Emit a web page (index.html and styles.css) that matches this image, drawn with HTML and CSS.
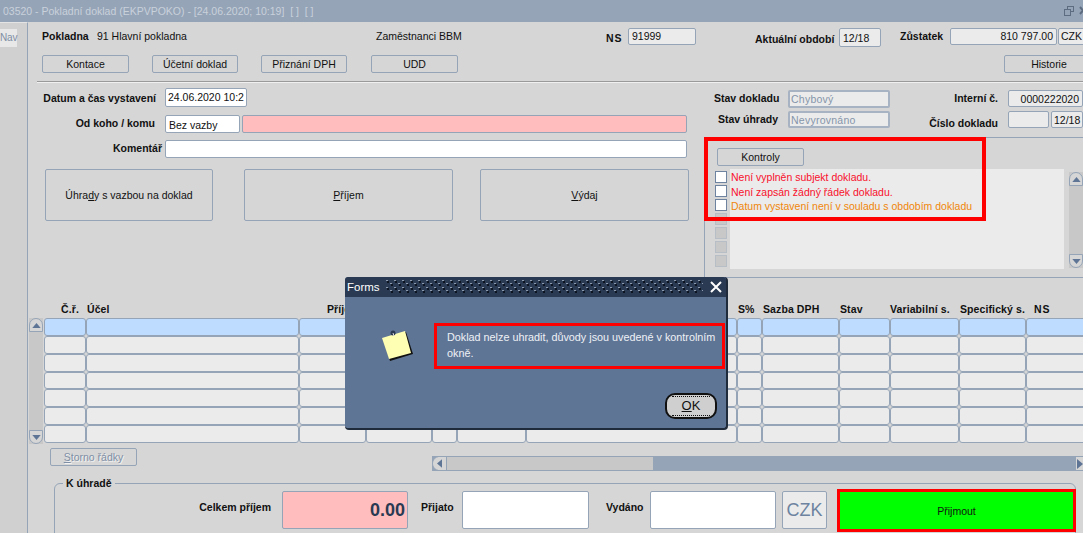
FILE: index.html
```html
<!DOCTYPE html>
<html lang="cs">
<head>
<meta charset="utf-8">
<title>Pokladní doklad</title>
<link rel="stylesheet" href="styles.css">
</head>
<body>
<div class="app">
  <header class="titlebar">
    <span class="title-text">03520 - Pokladní doklad (EKPVPOKO) - [24.06.2020; 10:19]&nbsp; [ ]&nbsp; [ ]</span>
    <svg class="win-icons" width="19" height="12" viewBox="0 0 19 12"><g fill="none" stroke="#5d6c80" stroke-width="1"><rect x="3.5" y="1.5" width="6" height="5"/><rect x="0.5" y="4.5" width="6" height="6" fill="#95a4b7"/><path d="M16 2l6 7M22 2l-6 7" stroke-width="2"/></g></svg>
  </header>
  <div class="workspace">
    <nav class="nav"><span class="nav-tab">Nav</span></nav>
    <main class="main">
      <section class="head-row">
        <b class="lbl">Pokladna</b>
        <span class="txt">91 Hlavní pokladna</span>
        <span class="txt">Zaměstnanci BBM</span>
        <b class="lbl wide">NS</b>
        <span class="field ro h17">91999</span>
        <span></span>
        <b class="lbl low">Aktuální období</b>
        <span class="field ro h20">12/18</span>
        <span></span>
        <b class="lbl">Zůstatek</b>
        <span class="field ro h17 right">810 797.00</span>
        <span></span>
        <span class="field ro h17 czk-code">CZK</span>
      </section>
      <section class="btn-row">
        <button class="btn w-87">Kontace</button>
        <button class="btn w-86 gap-23">Účetní doklad</button>
        <button class="btn w-86 gap-23">Přiznání DPH</button>
        <button class="btn w-87 gap-24">UDD</button>
        <button class="btn w-historie">Historie</button>
      </section>
      <div class="separator"></div>
      <section class="form-area">
        <div class="form-left">
          <div class="frow r-datum">
            <b class="lbl flabel">Datum a čas vystavení</b>
            <span class="field white w-datum">24.06.2020 10:2</span>
          </div>
          <div class="frow r-od">
            <b class="lbl flabel">Od koho / komu</b>
            <span class="field white w-vazba">Bez vazby</span>
            <span class="field pink w-subj"></span>
          </div>
          <div class="frow r-kom">
            <b class="lbl flabel kom">Komentář</b>
            <span class="field white w-kom"></span>
          </div>
          <div class="big-row">
            <button class="btn big b1">Úhra<u>d</u>y s vazbou na doklad</button>
            <button class="btn big b2"><u>P</u>říjem</button>
            <button class="btn big b3"><u>V</u>ýdaj</button>
          </div>
        </div>
        <div class="form-right">
          <div class="state">
            <div class="state-col">
              <div class="srow"><b class="lbl slabel">Stav dokladu</b><span class="field state-f">Chybový</span></div>
              <div class="srow"><b class="lbl slabel">Stav úhrady</b><span class="field state-f">Nevyrovnáno</span></div>
            </div>
            <div class="state-col">
              <div class="srow"><b class="lbl nlabel">Interní č.</b><span class="field ro num right">0000222020</span></div>
              <div class="srow"><b class="lbl nlabel low2">Číslo dokladu</b><span class="field ro cis"></span><span class="field ro per">12/18</span></div>
            </div>
          </div>
          <div class="control-panel">
            <button class="btn kontroly">Kontroly</button>
            <div class="checks">
              <div class="check-col">
                <i class="chk on"></i><i class="chk on"></i><i class="chk on"></i><i class="chk"></i><i class="chk"></i><i class="chk"></i><i class="chk"></i>
              </div>
              <div class="check-text">
                <div class="err">Není vyplněn subjekt dokladu.</div>
                <div class="err">Není zapsán žádný řádek dokladu.</div>
                <div class="warn">Datum vystavení není v souladu s obdobím dokladu</div>
              </div>
              <div class="vscroll small">
                <span class="sb-btn up"><svg width="9" height="5" viewBox="0 0 10 6"><path d="M5 0l5 6H0z"/></svg></span>
                <span class="sb-btn down"><svg width="9" height="5" viewBox="0 0 10 6"><path d="M0 0h10L5 6z"/></svg></span>
              </div>
            </div>
            <div class="highlight"></div>
          </div>
        </div>
      </section>
      <section class="table-area">
        <div class="grid-cols thead">
          <b class="h-cr">Č.ř.</b><b class="h-ucel">Účel</b><b class="h-prij">Příjem</b><b></b><b></b><b></b><b></b>
          <b class="h-s">S%</b><b class="h-s">Sazba DPH</b><b class="h-s">Stav</b><b class="h-v">Variabilní s.</b><b class="h-s">Specifický s.</b><b class="h-ns">NS</b>
        </div>
        <div class="table-body">
          <div class="vscroll">
            <span class="sb-btn up"><svg width="9" height="5" viewBox="0 0 10 6"><path d="M5 0l5 6H0z"/></svg></span>
            <span class="sb-btn down"><svg width="9" height="5" viewBox="0 0 10 6"><path d="M0 0h10L5 6z"/></svg></span>
          </div>
          <div class="grid-cols tbody" id="tbody"></div>
        </div>
      </section>
      <section class="under-table">
        <button class="btn storno"><u>S</u>torno řádky</button>
        <div class="hscroll">
          <span class="hs-left"><svg width="5" height="9" viewBox="0 0 6 10"><path d="M6 0v10L0 5z"/></svg></span>
          <span class="hs-thumb"></span>
          <span class="hs-track"></span>
          <span class="hs-right"><svg width="6" height="10" viewBox="0 0 6 10"><path d="M0 0l6 5-6 5z"/></svg></span>
        </div>
      </section>
      <fieldset class="pay">
        <legend>K úhradě</legend>
        <div class="pay-row">
          <b class="lbl pay-l1">Celkem příjem</b>
          <span class="field pink total">0.00</span>
          <b class="lbl pay-l2">Přijato</b>
          <span class="field white amt1"></span>
          <b class="lbl pay-l3">Vydáno</b>
          <span class="field white amt2"></span>
          <span class="field ro czk">CZK</span>
          <button class="accept">Přijmout</button>
        </div>
      </fieldset>
    </main>
  </div>
  <div class="dialog" role="dialog">
    <div class="dlg-title">
      <span class="dlg-name">Forms</span>
      <svg class="dlg-dots" width="318" height="14"><defs><pattern id="dots" width="8" height="7" patternUnits="userSpaceOnUse"><rect x="1" y="0" width="2" height="1" fill="#8d9aae"/><rect x="2" y="1" width="2" height="2" fill="#0d1522"/><rect x="5" y="3" width="2" height="1" fill="#8d9aae"/><rect x="6" y="4" width="2" height="2" fill="#0d1522"/></pattern></defs><rect width="318" height="14" fill="url(#dots)"/></svg>
      <svg class="dlg-x" width="12" height="12" viewBox="0 0 12 12"><path d="M1 1l10 10M11 1L1 11" stroke="#fff" stroke-width="2" fill="none"/></svg>
    </div>
    <div class="dlg-body">
      <svg class="note" width="34" height="34" viewBox="0 0 34 34"><path d="M3 11L26 4l7 22-23 7z" fill="#111" transform="translate(0 1)"/><path d="M2 11L25 4l6 22-22 6z" fill="#ffffb4"/><circle cx="13" cy="6" r="2.5" fill="#2a3a52"/><path d="M13 6l1 3" stroke="#ddd" stroke-width="1"/></svg>
      <div class="dlg-msg">Doklad nelze uhradit, důvody jsou uvedené v kontrolním okně.</div>
    </div>
    <div class="dlg-foot"><button class="dlg-ok"><span><u>O</u>K</span></button></div>
  </div>
</div>
<script src="app.js"></script>
</body>
</html>
```
FILE: styles.css
```css
* { box-sizing: border-box; }
html, body { margin: 0; height: 100%; overflow: hidden; }
body { font: 10.5px/14px "Liberation Sans", Arial, sans-serif; color: #111; background: #d6d6d6; }
button { font: inherit; color: inherit; padding: 0; margin: 0; }
b { font-weight: 700; }
.app { position: relative; width: 1083px; height: 533px; overflow: hidden; display: flex; flex-direction: column; }

.titlebar { flex: 0 0 22px; background: #95a4b7; color: #c9d1db; font-size: 10.5px; line-height: 22px; padding-left: 3px; display: flex; justify-content: space-between; align-items: center; overflow: hidden; }
.win-icons { flex: none; margin-right: 0; }
.workspace { flex: 1; display: flex; min-height: 0; }
.nav { flex: 0 0 28px; background: #d0d0d0; border-right: 1px solid #95a4b7; padding-top: 6px; border-top: 1px solid #e4e4e4; }
.nav-tab { display: block; width: 17px; height: 18px; line-height: 18px; background: #e8e8e8; color: #7f8ea3; font-size: 10px; letter-spacing: -.1px; }
.main { flex: 1; min-width: 0; display: flex; flex-direction: column; background: #d6d6d6; }

.lbl { white-space: nowrap; color: #111; }
.txt { white-space: nowrap; padding-top: 1px; }
.field { display: block; border: 1px solid #95a4b7; border-radius: 2px; padding: 0 3px; white-space: nowrap; overflow: hidden; height: 18px; line-height: 16px; }
.ro { background: #ebebeb; }
.white { background: #fff; }
.pink { background: #ffbdbd; }
.right { text-align: right; }
.h17 { height: 17px; line-height: 15px; }
.h20 { height: 19px; line-height: 19px; }
.czk-code { padding: 0 1px 0 2px; }

.head-row { display: grid; grid-template-columns: 55px 279px 230px 22px 68px 59px 84px 42px 19px 50px 107px 1px 30px; height: 27px; padding: 6px 0 0 14px; align-items: start; width: 1100px; flex: none; }
.head-row > .lbl { padding-top: 1px; }
.head-row .wide { letter-spacing: 1px; padding-top: 3px; }
.head-row .low { padding-top: 4px; }
.head-row .txt { padding-top: 1px; }

.btn-row { display: flex; height: 32px; padding: 6px 0 0 14px; flex: none; align-items: flex-start; }
.btn { display: block; height: 18px; line-height: 16px; background: #d6d6d6; border: 1px solid #95a4b7; border-radius: 2px; text-align: center; cursor: default; flex: none; }
.w-87 { width: 87px; }
.w-86 { width: 86px; }
.gap-23 { margin-left: 23px; }
.gap-24 { margin-left: 24px; }
.w-historie { width: 90px; margin-left: 546px; flex: none; }

.separator { flex: none; margin-left: 9px; height: 2px; border-top: 1px solid #9a9a9a; border-bottom: 1px solid #f0f0f0; }

.form-area { flex: 0 0 195px; display: flex; }
.form-left { flex: 0 0 676px; padding: 5px 0 0 15px; }
.frow { display: flex; }
.r-datum { height: 27px; }
.r-od { height: 25px; }
.r-kom { height: 29px; }
.flabel { width: 122px; text-align: right; padding: 2px 9px 0 0; flex: none; line-height: 16px; }
.r-od .flabel { padding-top: 0; padding-right: 10px; }
.r-kom .flabel { padding: 0 3px 0 0; }
.w-datum { width: 82px; height: 19px; padding: 0 2px; }
.w-vazba { width: 75px; height: 18px; line-height: 18px; }
.w-subj { width: 445px; margin-left: 2px; }
.w-kom { width: 522px; }
.big-row { display: flex; margin-left: 2px; }
.big { height: 52px; flex: none; }
.b1 { width: 168px; }
.b2 { width: 209px; margin-left: 31px; }
.b3 { width: 209px; margin-left: 27px; }

.form-right { flex: 1; min-width: 0; display: flex; flex-direction: column; }
.state { display: flex; padding-top: 7px; height: 54px; flex: none; }
.state-col { flex: none; }
.state-col:first-child { width: 176px; margin-left: 10px; }
.state-col:last-child { margin-left: 21px; }
.srow { display: flex; height: 20.5px; }
.slabel { width: 64px; text-align: right; flex: none; margin-right: 10px; line-height: 16px; }
.nlabel { width: 87px; text-align: right; flex: none; margin-right: 10px; line-height: 16px; }
.low2 { padding-top: 4px; line-height: 16px; }
.state-f { width: 102px; color: #8595aa; border-width: 2px; border-color: #a7b3c2; background: #ebebeb; line-height: 15px; padding: 0 1px; height: 17.5px; letter-spacing: .25px; }
.num { width: 75px; height: 17px; line-height: 17px; }
.cis { width: 41px; height: 17px; }
.per { width: 32px; margin-left: 2px; height: 17px; line-height: 17px; padding: 0 2px; }

.control-panel { position: relative; flex: 1; border-top: 1px solid #95a4b7; border-left: 1px solid #95a4b7; border-bottom: 1px solid #95a4b7; padding: 10px 0 0 12px; }
.kontroly { width: 87px; }
.checks { display: flex; margin: 3px 0 0 -2px; height: 100px; }
.check-col { flex: 0 0 15px; display: flex; flex-direction: column; gap: 2px; padding-top: 2px; }
.chk { display: block; width: 12px; height: 12px; background: #c8c8c8; border: 1px solid #b8bec6; }
.chk.on { background: #fff; border-color: #6d83a0; }
.check-text { flex: 0 0 334px; background: #ebebeb; padding: 1px 0 0 1px; line-height: 14.5px; }
.err { color: #f8102c; }
.warn { color: #f0860a; }
.highlight { position: absolute; left: -1px; top: -1px; width: 282px; height: 84px; border: 4px solid #f00; pointer-events: none; }

.vscroll { background: #c8c8c8; display: flex; flex-direction: column; justify-content: space-between; flex: none; }
.vscroll.small { width: 14px; margin: 3px 0 1px 5px; height: 96px; }
.sb-btn { display: flex; align-items: center; justify-content: center; height: 14px; border: 1px solid #95a4b7; background: #d6d6d6; }
.sb-btn svg { fill: #5f7596; }
.sb-btn.up { border-radius: 7px 7px 0 0; }
.sb-btn.down { border-radius: 0 0 7px 7px; }

.table-area { flex: none; }
.grid-cols { display: grid; grid-template-columns: 42px 213px 67px 66px 25px 69px 211px 25px 77px 51px 69px 67px 60px; }
.thead { margin-left: 16px; padding-top: 24px; height: 40px; letter-spacing: .1px; white-space: nowrap; width: 1042px; line-height: 14px; }
.h-cr { padding-left: 17px; }
.h-ucel { padding-left: 1px; }
.h-prij { padding-left: 28px; }
.h-s { padding-left: 1px; }
.h-v { padding-left: 0; }
.h-ns { padding-left: 8px; letter-spacing: 1px; }
.table-body { display: flex; padding-left: 1px; }
.table-body .vscroll { width: 14px; height: 126px; margin-right: 1px; }
.tbody { grid-auto-rows: 17.857px; width: 1042px; }
.cell { border: 1px solid #95a4b7; border-radius: 3px; background: #ebebeb; }
.cell.sel { background: #bddcff; }

.under-table { flex: none; display: flex; height: 31px; padding: 4px 0 0 22px; align-items: flex-start; }
.storno { width: 87px; height: 18px; color: #7f8fa5; text-shadow: 1px 1px 0 #f2f2f2; }
.hscroll { display: flex; margin: 8px 0 0 295px; height: 15px; width: 651px; border: 1px solid #95a4b7; border-width: 1px 0; background: #95a4b7; flex: none; }
.hs-left { width: 15px; background: #d6d6d6; border-right: 1px solid #95a4b7; border-left: 1px solid #95a4b7; border-radius: 7px 0 0 7px; display: flex; align-items: center; justify-content: center; }
.hs-left svg, .hs-right svg { fill: #5f7596; }
.hs-thumb { width: 206px; background: #c8c8c8; }
.hs-track { width: 423px; }
.hs-right { width: 7px; background: #d6d6d6; display: flex; align-items: center; padding-left: 1px; overflow: hidden; }

.pay { margin: 1px 0 0 26px; width: 1022px; height: 70px; padding: 0; border: 1px solid #95a4b7; border-radius: 6px 6px 0 0; flex: none; min-width: 0; }
.pay legend { margin-left: 8px; padding: 0 3px; font-weight: 700; line-height: 14px; }
.pay-row { display: flex; align-items: flex-start; padding-top: 1px; }
.pay-l1 { width: 216px; text-align: right; padding-top: 9px; flex: none; }
.total { width: 126px; height: 38px; margin-left: 11px; color: #2a3a52; font: 700 18px/36px "Liberation Sans", Arial, sans-serif; text-align: right; padding-right: 2px; flex: none; }
.pay-l2 { margin-left: 13px; width: 41px; padding-top: 9px; flex: none; }
.amt1 { width: 127px; height: 38px; flex: none; }
.pay-l3 { margin-left: 17px; width: 44px; padding-top: 9px; flex: none; }
.amt2 { width: 126px; height: 38px; flex: none; }
.czk { width: 45px; height: 38px; margin-left: 6px; color: #6d83a0; font-size: 18px; line-height: 36px; text-align: center; padding: 0; flex: none; }
.accept { width: 239px; height: 43px; margin: -2px 0 0 10px; background: #0f0; border: 3px solid #f00; flex: none; cursor: default; }

.dialog { position: absolute; left: 345px; top: 277px; width: 383px; height: 153px; background: #5f7596; border: 1px solid #1f2a3a; border-width: 0 2px 2px 0; border-radius: 4px; display: flex; flex-direction: column; }
.dlg-title { flex: 0 0 20px; background: #2a3a52; color: #fff; border-radius: 3px 3px 0 0; display: flex; align-items: center; padding: 0 4px 0 2px; font-size: 11.5px; }
.dlg-name { width: 38px; flex: none; }
.dlg-dots { flex: none; }
.dlg-x { flex: none; margin-left: auto; margin-right: 0; }
.dlg-body { display: flex; height: 71px; flex: none; position: relative; }
.note { flex: none; margin: 30px 0 0 35px; }
.dlg-msg { flex: none; width: 291px; height: 46px; margin: 26px 0 0 20px; border: 3px solid #f00; padding: 3px 0 0 10px; color: #eef1f5; font-size: 10.8px; line-height: 16px; }
.dlg-foot { display: flex; justify-content: flex-end; padding: 25px 9px 0 0; }
.dlg-ok { width: 52px; height: 26px; background: #cfcfcf; border: 2px solid #111; border-radius: 10px; font-size: 13px; display: flex; align-items: center; justify-content: center; cursor: default; }
.dlg-ok span { display: block; width: 38px; text-align: center; border-top: 1px dotted #111; border-bottom: 1px dotted #111; line-height: 18px; height: 20px; }
```
FILE: app.js
```js
var body = document.getElementById('tbody');
for (var r = 0; r < 7; r++) {
  for (var c = 0; c < 13; c++) {
    var cell = document.createElement('div');
    cell.className = r === 0 ? 'cell sel' : 'cell';
    body.appendChild(cell);
  }
}
```
